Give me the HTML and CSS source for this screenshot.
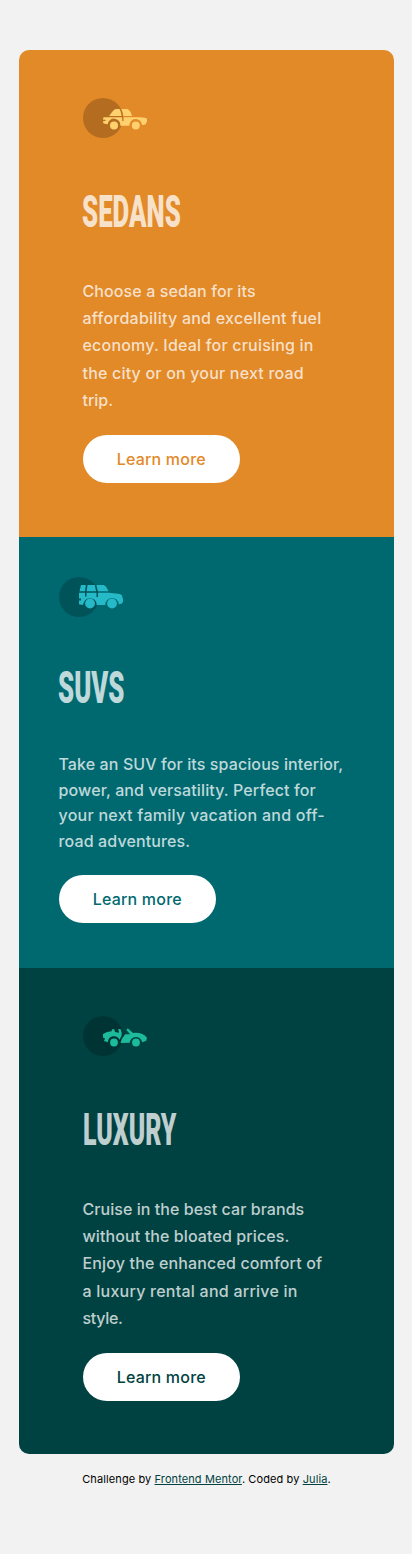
FILE: index.html
```
<!DOCTYPE html>
<html lang="en">
<head>
<meta charset="utf-8">
<meta name="viewport" content="width=device-width, initial-scale=1">
<title>3-column preview card</title>
<link rel="stylesheet" href="styles.css">
</head>
<body>
<main class="cards">
  <section class="card sedans">
    <svg class="icon" width="64" height="40" viewBox="0 0 64 40" aria-hidden="true">
      <circle cx="20" cy="20" r="20" fill="#000" opacity=".2"/>
      <g fill="#ffd16e">
        <path d="M26 18C29 15 30 11.500 33 11h3.500q1.800 3 2.200 7zM38.300 11h5.500c3 .5 4.500 4 5.200 7H40.500q-.4-4-2.200-7z"/>
        <path d="M20.500 19.300H39q.3 1.800.3 3.700h1.500q0-2-.3-3.700H50q9-.5 13 .7 1.500 1 1 3.500l-1.600 3-3.400.5a6.300 6.300 0 0 0-12.600.7H37.300a6.300 6.300 0 0 0-12.600-1.500L20.500 25.500l-.5-2.500h2.500v-1.300H20z"/>
        <circle cx="31" cy="27.500" r="4"/><circle cx="52.800" cy="27.500" r="4"/>
      </g>
    </svg>
    <h2 class="title"><span class="glyphs">SEDANS</span></h2>
    <p class="text"><span class="l1">Choose a sedan for its</span> <span class="l2">affordability and excellent fuel</span> <span class="l3">economy. Ideal for cruising in</span> <span class="l4">the city or on your next road</span> <span class="l5">trip.</span></p>
    <a class="button">Learn more</a>
  </section>
  <section class="card suvs">
    <svg class="icon" width="64" height="40" viewBox="0 0 64 40" aria-hidden="true">
      <circle cx="20" cy="20" r="20" fill="#000" opacity=".2"/>
      <g fill="#26b9c7">
        <path d="M22 8h4.800L26 14.300h-5.500zM28.500 8h7.300l1.300 6.300h-9.500zM37.500 8h7q3 1 5 6.300H38.800z"/>
        <path d="M20 15.800h6v3.700h1.500v-3.700h10V20H39v-4.200h11l11 1.200q2.500.8 2.500 3.500l.5 1.500v3l-1.500 1.800-2.800.4a6.700 6.700 0 0 0-13.400.8H37.700a6.700 6.700 0 0 0-12.700-3L24 28l-4-.7v-3.800h2v-2h-2z"/>
        <circle cx="31" cy="26.500" r="4.900"/><circle cx="53" cy="26.500" r="4.900"/>
      </g>
    </svg>
    <h2 class="title"><span class="glyphs">SUVS</span></h2>
    <p class="text"><span class="l1">Take an SUV for its spacious interior,</span> <span class="l2">power, and versatility. Perfect for</span> <span class="l3">your next family vacation and off-</span> <span class="l4">road adventures.</span></p>
    <a class="button">Learn more</a>
  </section>
  <section class="card luxury">
    <svg class="icon" width="64" height="40" viewBox="0 0 64 40" aria-hidden="true">
      <circle cx="20" cy="20" r="20" fill="#000" opacity=".2"/>
      <g fill="#1cbb9b">
        <path d="M20 18q4-2.500 8.500-2.700l.5-2h2.300l.7 2.700 4 .7-.7-3.700h2.200q2 4 1 7l-2 3.800a6 6 0 0 0-11.500 2.500L21 25l1-2.500-2-1z"/>
        <path d="M37.500 27q.8-4.500 4.700-8.800h5L43.300 14l1.500-1.700 5.200 4.700q9.500-1 14 4.800l-.8 3-4 1.500a6.300 6.300 0 0 0-12.500.5z"/>
        <circle cx="31" cy="26.500" r="3.900"/><circle cx="53" cy="26.500" r="3.900"/>
      </g>
    </svg>
    <h2 class="title"><span class="glyphs">LUXURY</span></h2>
    <p class="text"><span class="l1">Cruise in the best car brands</span> <span class="l2">without the bloated prices.</span> <span class="l3">Enjoy the enhanced comfort of</span> <span class="l4">a luxury rental and arrive in</span> <span class="l5">style.</span></p>
    <a class="button">Learn more</a>
  </section>
</main>
<footer class="attribution">Challenge by <a>Frontend Mentor</a>. Coded by <a>Julia</a>.</footer>
</body>
</html>
```
FILE: styles.css
```
* { box-sizing: border-box; }
body { margin: 0; min-height: 1554px; padding: 50px 18px 0 19px; background: #f2f2f2; font-family: Inter, sans-serif; }
.cards { border-radius: 10px; overflow: hidden; }
.card { display: flex; flex-direction: column; align-items: flex-start; }
.sedans { height: 487px; padding: 48px 63.5px 0; background: #e28928; color: #e28928; }
.suvs { height: 431px; padding: 40px 39.5px 0; background: #006970; color: #006970; }
.luxury { height: 486px; padding: 48px 63.5px 0; background: #004241; color: #004241; }
.icon { display: block; flex: none; margin-left: .5px; }
.title { margin: 54px 0 46px -.6px; height: 40px; font: 900 45px/40px Roboto, sans-serif; color: rgba(255,255,255,.75); white-space: nowrap; }
.glyphs { display: inline-block; transform: scaleX(.573); transform-origin: 0 50%; }
.suvs .title { margin: 51px 0 44px -.6px; }
.luxury .title { margin-left: 0; }
.luxury .glyphs { transform: scaleX(.553); }
.text { margin: 0 0 21px; font-size: 16px; font-weight: 450; line-height: 27.2px; color: rgba(255,255,255,.75); white-space: nowrap; }
.suvs .text { line-height: 25.6px; }
.text span { display: block; }
.sedans .l1 { letter-spacing: .1px; }
.sedans .l2 { letter-spacing: .25px; }
.sedans .l3 { letter-spacing: .2px; }
.sedans .l4 { letter-spacing: .19px; }
.suvs .l1 { letter-spacing: .1px; }
.suvs .l2 { letter-spacing: .12px; }
.suvs .l3 { letter-spacing: .26px; }
.suvs .l4 { letter-spacing: .13px; }
.luxury .l1 { letter-spacing: .05px; }
.luxury .l2 { letter-spacing: .1px; }
.luxury .l3 { letter-spacing: .15px; }
.luxury .l4 { letter-spacing: .24px; }
.luxury .l5 { letter-spacing: -.3px; }
.button { width: 157.5px; height: 48px; border-radius: 25px; background: #fff; font-size: 16px; font-weight: 450; letter-spacing: .2px; line-height: 48px; text-align: center; }
.attribution { margin-top: 16px; font-size: 11px; letter-spacing: .1px; line-height: 18px; text-align: center; color: #000; }
.attribution a { color: #004241; text-decoration: underline; }
```
